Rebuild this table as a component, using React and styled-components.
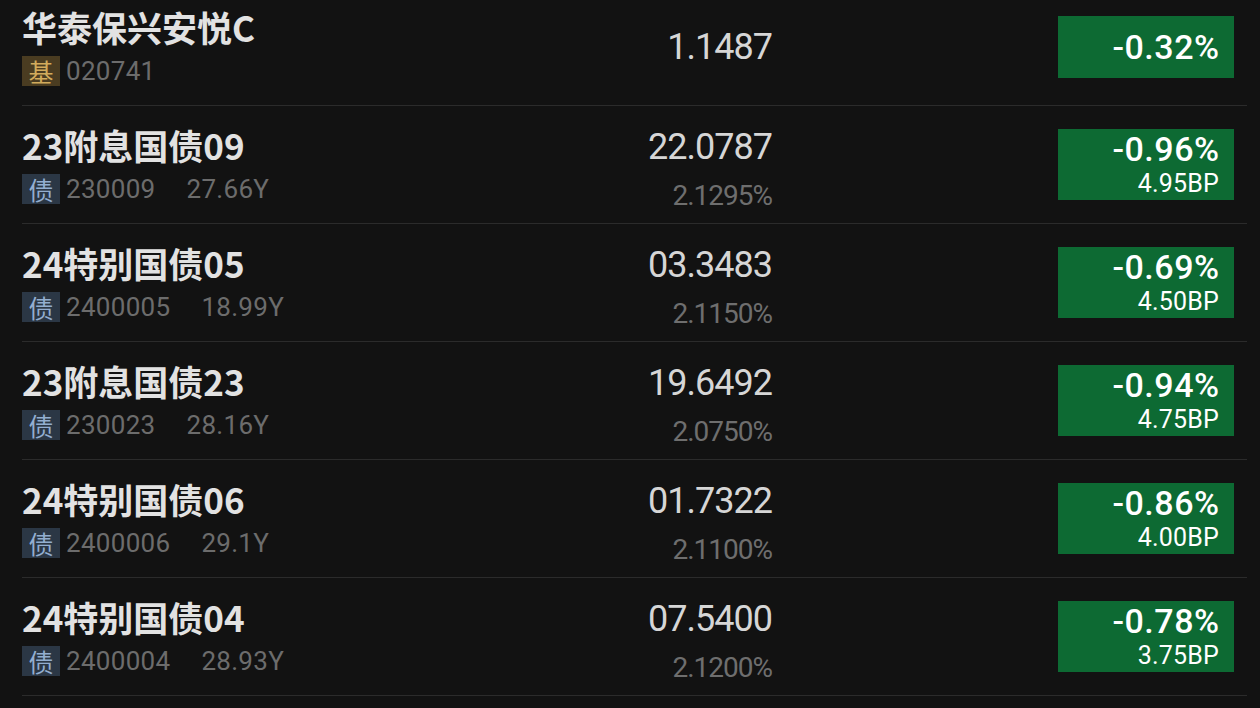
import React from "react";
import styled, { createGlobalStyle } from "styled-components";

const GlobalStyle = createGlobalStyle`
  html, body {
    margin: 0;
    padding: 0;
    background: #121212;
    overflow: hidden;
  }
  body {
    font-family: "Noto Sans CJK SC", "Noto Sans", sans-serif;
  }
`;

const Page = styled.div`
  width: 1260px;
  height: 708px;
  overflow: hidden;
  background: #121212;
`;

const List = styled.div`
  margin-top: -12px;
`;

const Row = styled.div`
  display: flex;
  align-items: stretch;
  height: 117px;
  margin: 0 13px 0 22px;
  border-bottom: 1px solid #2b2b2b;
`;

const Info = styled.div`
  flex: 1;
  padding-top: 19px;
  min-width: 0;
`;

const Name = styled.div`
  font-family: "Noto Sans CJK SC", sans-serif;
  font-weight: 700;
  font-size: 35px;
  line-height: 40px;
  color: #e2e2e2;
  white-space: nowrap;
`;

const Meta = styled.div`
  display: flex;
  align-items: center;
  height: 30px;
  margin-top: 9px;
`;

const Tag = styled.span`
  display: inline-flex;
  align-items: center;
  justify-content: center;
  width: 38px;
  height: 30px;
  font-family: "Noto Sans CJK SC", sans-serif;
  font-size: 25px;
  background: ${p => (p.kind === "fund" ? "#4a3c21" : "#2b3745")};
  color: ${p => (p.kind === "fund" ? "#d2ab5c" : "#93aed0")};
`;

const Code = styled.span`
  font-family: Roboto, "Noto Sans", sans-serif;
  font-size: 26px;
  color: #6c6c6c;
  margin-left: 6px;
  letter-spacing: 0.3px;
`;

const Term = styled.span`
  font-family: Roboto, "Noto Sans", sans-serif;
  font-size: 26px;
  color: #6c6c6c;
  margin-left: 31px;
  letter-spacing: 0.3px;
`;

const PriceCol = styled.div`
  width: 124px;
  margin-right: 285px;
  display: flex;
  flex-direction: column;
  align-items: flex-end;
  justify-content: ${p => (p.single ? "center" : "flex-start")};
  padding-top: ${p => (p.single ? "0" : "23px")};
  overflow: hidden;
`;

const Price = styled.div`
  font-family: Roboto, sans-serif;
  font-size: 36px;
  line-height: 36px;
  letter-spacing: -1px;
  margin-right: 1px;
  color: #d6d6d6;
  white-space: nowrap;
`;

const Yield = styled.div`
  font-family: Roboto, sans-serif;
  font-size: 28px;
  line-height: 30px;
  letter-spacing: -1px;
  margin-right: 1px;
  margin-top: 16px;
  color: #6e6e6e;
  white-space: nowrap;
`;

const Badge = styled.div`
  align-self: center;
  width: 176px;
  height: ${p => (p.single ? "62px" : "71px")};
  box-sizing: border-box;
  padding: ${p => (p.single ? "0 15px" : "1px 15px 0")};
  background: #0d6a33;
  color: #ffffff;
  display: flex;
  flex-direction: column;
  align-items: flex-end;
  justify-content: ${p => (p.single ? "center" : "flex-start")};
`;

const Change = styled.div`
  font-family: Roboto, sans-serif;
  font-weight: 500;
  font-size: 34px;
  line-height: 38px;
  letter-spacing: 0.5px;
  margin-right: -0.5px;
`;

const Bp = styled.div`
  font-family: Roboto, sans-serif;
  font-size: 25px;
  line-height: 32px;
  letter-spacing: 0.2px;
`;

const Tail = styled.div`
  width: 13px;
`;

const rows = [
  { name: "华泰保兴安悦C", tag: "基", kind: "fund", code: "020741", price: "1.1487", change: "-0.32%" },
  { name: "23附息国债09", tag: "债", code: "230009", term: "27.66Y", price: "22.0787", yld: "2.1295%", change: "-0.96%", bp: "4.95BP" },
  { name: "24特别国债05", tag: "债", code: "2400005", term: "18.99Y", price: "103.3483", yld: "2.1150%", change: "-0.69%", bp: "4.50BP" },
  { name: "23附息国债23", tag: "债", code: "230023", term: "28.16Y", price: "19.6492", yld: "2.0750%", change: "-0.94%", bp: "4.75BP" },
  { name: "24特别国债06", tag: "债", code: "2400006", term: "29.1Y", price: "101.7322", yld: "2.1100%", change: "-0.86%", bp: "4.00BP" },
  { name: "24特别国债04", tag: "债", code: "2400004", term: "28.93Y", price: "107.5400", yld: "2.1200%", change: "-0.78%", bp: "3.75BP" },
];

export default function App() {
  return (
    <Page>
      <GlobalStyle />
      <List>
        {rows.map(r => (
          <Row key={r.code}>
            <Info>
              <Name>{r.name}</Name>
              <Meta>
                <Tag kind={r.kind}>{r.tag}</Tag>
                <Code>{r.code}</Code>
                {r.term && <Term>{r.term}</Term>}
              </Meta>
            </Info>
            <PriceCol single={!r.yld}>
              <Price>{r.price}</Price>
              {r.yld && <Yield>{r.yld}</Yield>}
            </PriceCol>
            <Badge single={!r.bp}>
              <Change>{r.change}</Change>
              {r.bp && <Bp>{r.bp}</Bp>}
            </Badge>
            <Tail />
          </Row>
        ))}
      </List>
    </Page>
  );
}
